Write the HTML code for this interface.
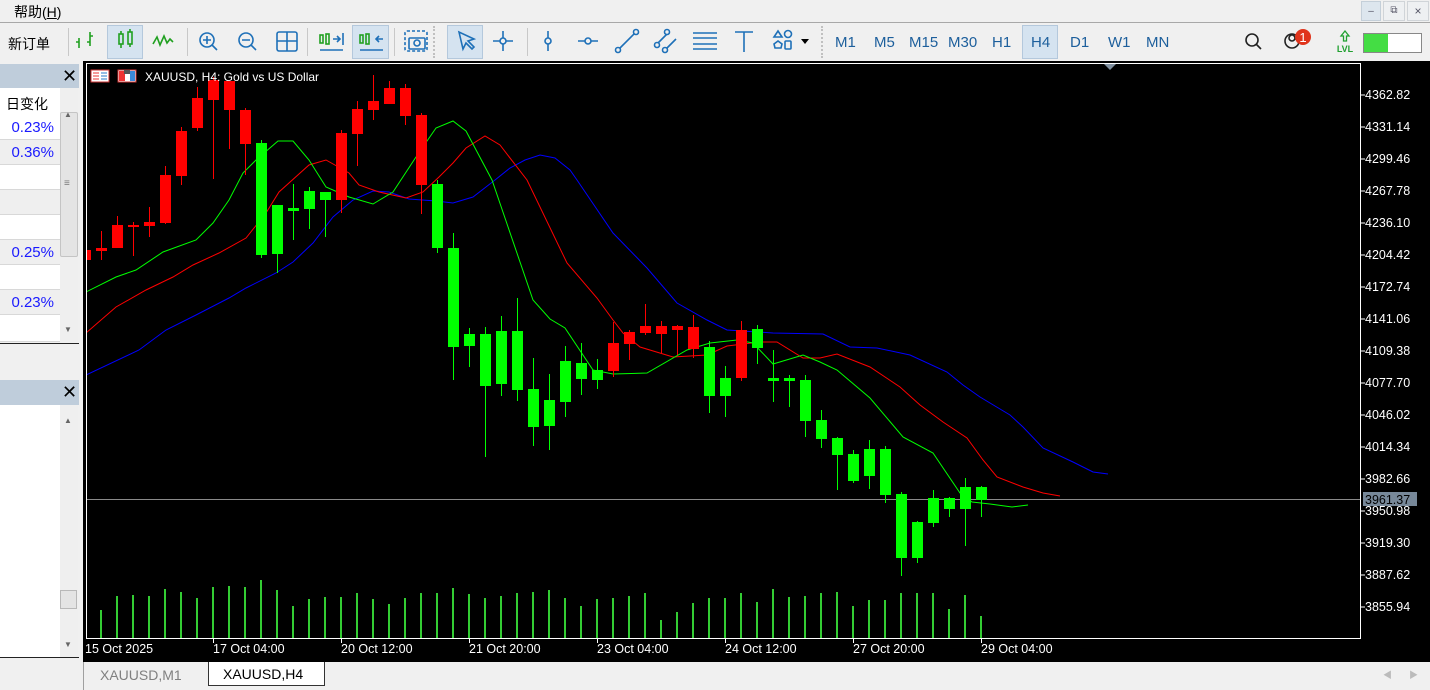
<!DOCTYPE html>
<html><head><meta charset="utf-8"><style>
*{margin:0;padding:0;box-sizing:border-box}
body{width:1430px;height:690px;position:relative;overflow:hidden;background:#f0f0f0;font-family:"Liberation Sans","Noto Sans CJK SC",sans-serif;font-size:13px;color:#000}
.a{position:absolute}
.tf{position:absolute;top:34px;font-size:15px;color:#1d5f9c}
.sep{position:absolute;top:28px;width:1px;height:28px;background:#c8c8c8}
.dsep{position:absolute;top:26px;width:2px;height:32px;border-left:2px dotted #c0c0c0}
.sel{position:absolute;top:25px;height:34px;background:#d5e3f0;border:1px solid #b4c8dc}
.row{position:absolute;left:0;width:60px;height:25px;border-bottom:1px solid #d8d8d8;color:#1a1aff;font-size:15px;text-align:right;padding-right:6px;line-height:25px}
</style></head><body>
<div class="a" style="left:14px;top:2px;font-size:14px">帮助(<u>H</u>)</div>
<div class="a" style="left:1361px;top:1px;width:20px;height:20px;background:#dde6ee;border:1px solid #c4cfd9;text-align:center;font-size:10px;color:#556;line-height:20px">–</div>
<div class="a" style="left:1383px;top:1px;width:22px;height:20px;background:#eef0f2;border:1px solid #d0d4d8;text-align:center;font-size:10px;color:#556;line-height:18px">⧉</div>
<div class="a" style="left:1407px;top:1px;width:22px;height:20px;background:#eef0f2;border:1px solid #d0d4d8;text-align:center;font-size:12px;color:#556;line-height:18px">×</div>
<div class="a" style="left:0;top:22px;width:1430px;height:1px;background:#a8a8a8"></div>
<div class="a" style="left:8px;top:34px;font-size:14px">新订单</div>
<div class="sep" style="left:68px"></div>
<div class="sel" style="left:107px;width:36px"></div>
<div class="sel" style="left:352px;width:37px"></div>
<div class="sel" style="left:447px;width:36px"></div>
<div class="sel" style="left:1022px;width:36px"></div>
<div class="sep" style="left:187px"></div><div class="sep" style="left:307px"></div><div class="sep" style="left:394px"></div>
<div class="dsep" style="left:433px"></div><div class="sep" style="left:527px"></div><div class="dsep" style="left:821px"></div>
<svg class="a" style="left:0;top:22px" width="1430" height="40" fill="none" stroke-width="1.6">
<g stroke="#20a020"><path d="M79 26v-10M76 20h3M90 24v-14M90 14h3M87 20h3"/>
<rect x="119" y="12" width="4" height="10"/><path d="M121 9v3M121 22v4"/><rect x="128" y="10" width="4" height="12"/><path d="M130 7v3M130 22v3"/>
<path d="M153 22l4-7 3 8 4-9 3 7 3-4 3 3"/>
<rect x="320" y="13" width="3" height="8"/><rect x="326" y="12" width="3" height="10"/><rect x="360" y="13" width="3" height="8"/><rect x="366" y="12" width="3" height="10"/></g>
<g stroke="#1e70b8"><circle cx="207" cy="18" r="7"/><path d="M212 23l5 5M203 18h8M207 14v8"/>
<circle cx="246" cy="18" r="7"/><path d="M251 23l5 5M242 18h8"/>
<rect x="277" y="10" width="20" height="19" rx="2"/><path d="M287 10v19M277 19h20"/>
<path d="M333 17h6M337 14l3 3-3 3M343 11v12M320 28h23"/><path d="M383 17h-6M379 14l-3 3 3 3M360 28h23"/>
<rect x="405" y="9" width="22" height="20" rx="2" stroke-dasharray="3 2"/><rect x="409" y="16" width="16" height="11" rx="1"/><circle cx="417" cy="21" r="3"/>
<path d="M459 10l4 17 3-6 6 6 2-2-6-6 6-2z"/>
<path d="M503 9v20M493 19h20"/><circle cx="503" cy="19" r="3" fill="#f0f0f0"/>
<path d="M548 9v20"/><circle cx="548" cy="19" r="3" fill="#f0f0f0"/>
<path d="M578 19h20"/><circle cx="588" cy="19" r="3" fill="#f0f0f0"/>
<path d="M617 29l20-20"/><circle cx="618" cy="28" r="2.5" fill="#f0f0f0"/><circle cx="636" cy="10" r="2.5" fill="#f0f0f0"/>
<path d="M656 23l12-12M664 29l12-12"/><circle cx="657" cy="23" r="2.5" fill="#f0f0f0"/><circle cx="667" cy="10" r="2.5" fill="#f0f0f0"/><circle cx="665" cy="28" r="2.5" fill="#f0f0f0"/>
<path d="M693 11h24M693 16h24M693 22h24M693 27h24"/>
<path d="M735 10h18M744 10v20"/>
<path d="M778 9l4 6h-8z"/><circle cx="788" cy="12" r="3.5"/><path d="M774 22l4-3 4 3-1 4h-6z"/><rect x="785" y="19" width="6" height="8" rx="1"/></g>
<path d="M801 17h8l-4 5z" fill="#000"/>
<g stroke="#222"><circle cx="1252" cy="18" r="6"/><path d="M1256 22l5 5"/><circle cx="1292" cy="19" r="7"/><circle cx="1292" cy="16" r="3"/></g>
<circle cx="1303" cy="15" r="8" fill="#e0341c"/><text x="1303" y="20" fill="#fff" font-size="13" text-anchor="middle" stroke="none" font-family="Liberation Sans">1</text>
<path d="M1345 9l-4 5h2.5v5h3v-5h2.5z" stroke="#20a030" stroke-width="1.3"/>
<text x="1345" y="30" fill="#20a030" font-size="9" text-anchor="middle" font-family="Liberation Sans" font-weight="bold">LVL</text>
<rect x="1363.5" y="11.5" width="58" height="19" fill="#fff" stroke="#888" stroke-width="1"/><rect x="1364" y="12" width="24" height="18" fill="#44dd44" stroke="none"/>
</svg>
<div class="tf" style="left:835px">M1</div><div class="tf" style="left:874px">M5</div><div class="tf" style="left:909px">M15</div><div class="tf" style="left:948px">M30</div><div class="tf" style="left:992px">H1</div><div class="tf" style="left:1031px">H4</div><div class="tf" style="left:1070px">D1</div><div class="tf" style="left:1108px">W1</div><div class="tf" style="left:1146px">MN</div>
<div class="a" style="left:0;top:61px;width:83px;height:601px;background:#f0f0f0"></div>
<div class="a" style="left:0;top:64px;width:79px;height:24px;background:#bfcddb"></div>
<div class="a" style="left:62px;top:64px;font-size:18px;line-height:24px">✕</div>
<div class="a" style="left:0;top:88px;width:60px;height:254px;background:#fff"></div>
<div class="a" style="left:6px;top:94px;font-size:14px">日变化</div>
<div class="row" style="top:115px;background:#fff">0.23%</div>
<div class="row" style="top:140px;background:#efefef">0.36%</div>
<div class="row" style="top:165px;background:#fff"></div>
<div class="row" style="top:190px;background:#efefef"></div>
<div class="row" style="top:215px;background:#fff"></div>
<div class="row" style="top:240px;background:#efefef">0.25%</div>
<div class="row" style="top:265px;background:#fff"></div>
<div class="row" style="top:290px;background:#efefef">0.23%</div>
<div class="row" style="top:315px;background:#fff;height:27px"></div>
<div class="a" style="left:60px;top:88px;width:18px;height:254px;background:#efefef"></div>
<div class="a" style="left:60px;top:112px;width:18px;height:145px;background:#e4e4e4;border:1px solid #c4c4c4;border-radius:2px"></div>
<div class="a" style="left:64px;top:110px;font-size:8px;color:#666">▲</div><div class="a" style="left:64px;top:325px;font-size:8px;color:#666">▼</div>
<div class="a" style="left:64px;top:178px;font-size:10px;color:#777">≡</div>
<div class="a" style="left:0;top:343px;width:79px;height:1px;background:#222"></div>
<div class="a" style="left:0;top:380px;width:79px;height:25px;background:#bfcddb"></div>
<div class="a" style="left:62px;top:380px;font-size:18px;line-height:25px">✕</div>
<div class="a" style="left:0;top:405px;width:60px;height:252px;background:#fff"></div>
<div class="a" style="left:60px;top:405px;width:18px;height:252px;background:#efefef"></div>
<div class="a" style="left:60px;top:590px;width:17px;height:19px;background:#e4e4e4;border:1px solid #b8b8b8"></div>
<div class="a" style="left:64px;top:416px;font-size:8px;color:#666">▲</div><div class="a" style="left:64px;top:640px;font-size:8px;color:#666">▼</div>
<div class="a" style="left:0;top:657px;width:79px;height:1px;background:#222"></div>
<div class="a" style="left:83px;top:61px;width:1347px;height:601px;background:#000"></div>
<svg class="a" style="left:0;top:0" width="1430" height="690" font-family="Liberation Sans" font-size="12.5">
<defs><clipPath id="c"><rect x="87" y="64" width="1273" height="574"/></clipPath></defs>
<rect x="86.5" y="63.5" width="1274" height="575" fill="none" stroke="#fff"/>
<path d="M1104 64h12l-6 6z" fill="#8090a0"/>
<line x1="87" y1="499.5" x2="1360" y2="499.5" stroke="#8a8a8a"/>
<g clip-path="url(#c)" fill="none" stroke-width="1">
<polyline stroke="#0000ff" points="86,375 139,350 166,330 196,315 229,298 246,288 276,273 293,262 313,243 333,217 353,200 373,191 389,192 409,199 436,201 453,203 473,197 495,180 510,168 525,160 540,155 555,158 570,170 577,180 613,233 647,268 677,303 707,320 727,330 773,333 823,334 850,347 877,348 910,355 947,372 963,385 980,397 1010,415 1023,427 1043,448 1073,462 1093,472 1108,474"/>
<polyline stroke="#ff0000" points="86,333 116,307 146,290 173,277 193,265 219,253 246,238 266,213 279,192 309,165 326,160 349,173 359,185 379,192 406,198 423,192 439,177 453,163 466,148 485,136 500,145 527,180 567,263 597,298 613,320 623,333 640,347 673,357 707,355 727,346 760,342 777,342 803,358 820,358 837,354 870,367 900,387 920,405 943,422 967,438 983,460 997,477 1023,487 1043,493 1060,496"/>
<polyline stroke="#00ff00" points="86,292 116,277 136,270 163,252 196,240 213,223 229,200 243,173 256,160 278,141 293,141 309,160 326,187 349,197 373,204 393,192 416,157 436,128 453,121 466,131 492,180 533,300 550,319 565,328 593,370 613,374 647,373 687,350 710,343 737,340 753,343 773,364 803,355 820,362 837,370 870,398 903,437 933,453 960,493 972,502 990,504 1012,507 1028,505"/>
</g>
<g clip-path="url(#c)" id="cd"></g>
<g fill="#33cc33" id="vol"></g>
<g fill="#fff">
<text x="1365" y="99">4362.82</text><text x="1365" y="131">4331.14</text><text x="1365" y="163">4299.46</text><text x="1365" y="195">4267.78</text><text x="1365" y="227">4236.10</text><text x="1365" y="259">4204.42</text><text x="1365" y="291">4172.74</text><text x="1365" y="323">4141.06</text><text x="1365" y="355">4109.38</text><text x="1365" y="387">4077.70</text><text x="1365" y="419">4046.02</text><text x="1365" y="451">4014.34</text><text x="1365" y="483">3982.66</text><text x="1365" y="515">3950.98</text><text x="1365" y="547">3919.30</text><text x="1365" y="579">3887.62</text><text x="1365" y="611">3855.94</text>
<text x="85" y="653">15 Oct 2025</text><text x="213" y="653">17 Oct 04:00</text><text x="341" y="653">20 Oct 12:00</text><text x="469" y="653">21 Oct 20:00</text><text x="597" y="653">23 Oct 04:00</text><text x="725" y="653">24 Oct 12:00</text><text x="853" y="653">27 Oct 20:00</text><text x="981" y="653">29 Oct 04:00</text>
<text x="145" y="81" font-size="12">XAUUSD, H4:  Gold vs US Dollar</text>
</g>
<path stroke="#fff" d="M1361 95h4M1361 127h4M1361 159h4M1361 191h4M1361 223h4M1361 255h4M1361 287h4M1361 319h4M1361 351h4M1361 383h4M1361 415h4M1361 447h4M1361 479h4M1361 511h4M1361 543h4M1361 575h4M1361 607h4M213.5 639v4M341.5 639v4M469.5 639v4M597.5 639v4M725.5 639v4M853.5 639v4M981.5 639v4"/>
<rect x="1363" y="492" width="54" height="14" fill="#778899"/><text x="1365" y="504" fill="#000">3961.37</text>
<g><rect x="91" y="70" width="18" height="12" fill="#fff" stroke="#c33"/><path d="M93 73h6M93 76h6M93 79h6" stroke="#e33"/><path d="M101 73h6M101 76h6M101 79h6" stroke="#2878c8"/>
<rect x="118" y="70" width="18" height="12" fill="#fff" stroke="#c33"/><rect x="119" y="71" width="6" height="10" fill="#e33"/><rect x="130" y="71" width="5" height="10" fill="#3a8ad8"/><rect x="124" y="70" width="6" height="4" fill="#555"/></g>
</svg>
<script>
var C=[["r",250,260,246,262],["r",248,251,231,260],["r",225,248,216,248],["r",225,226,222,256],["r",222,226,207,237],["r",175,223,166,224],["r",131,176,127,185],["r",98,128,87,131],["r",80,100,77,179],["r",81,110,81,149],["r",110,144,108,175],["g",143,255,140,258],["g",205,254,205,273],["g",208,211,184,240],["g",191,209,187,229],["g",192,200,192,237],["r",133,200,130,213],["r",109,134,101,166],["r",101,110,75,120],["r",88,104,81,104],["r",88,116,84,125],["r",115,185,113,214],["g",184,248,180,253],["g",248,347,233,380],["g",334,346,328,367],["g",334,386,327,457],["g",331,384,316,396],["g",331,390,298,401],["g",389,427,358,446],["g",400,426,374,450],["g",361,402,346,417],["g",363,379,343,395],["g",370,380,359,389],["r",343,371,322,377],["r",332,344,330,360],["r",326,333,304,335],["r",326,334,321,353],["r",326,330,325,355],["r",327,349,315,358],["g",347,396,341,413],["g",378,396,366,417],["r",330,378,321,381],["g",329,348,325,364],["g",378,381,350,402],["g",378,381,375,407],["g",380,421,375,437],["g",420,439,410,448],["g",438,455,437,490],["g",454,481,450,483],["g",449,476,440,489],["g",449,495,446,503],["g",494,558,492,576],["g",522,558,521,563],["g",498,523,490,527],["g",498,509,497,517],["g",487,509,478,546],["g",487,500,486,517]];
var V=[0,610,596,595,596,589,592,598,587,586,587,580,590,606,599,597,597,593,599,604,598,593,593,588,594,598,596,593,592,590,598,606,599,598,596,593,620,612,603,598,598,593,602,589,597,596,593,592,606,600,600,593,593,593,609,595,616];
var s="",v="";
C.forEach(function(c,k){var col=c[0]=="r"?"#ff0000":"#00ff00";s+='<rect x="'+(85+16*k)+'" y="'+c[3]+'" width="1" height="'+(c[4]-c[3])+'" fill="'+col+'"/><rect x="'+(80+16*k)+'" y="'+c[1]+'" width="11" height="'+Math.max(c[2]-c[1],2)+'" fill="'+col+'"/>';});
for(var k=1;k<V.length;k++)v+='<rect x="'+(84+16*k)+'" y="'+V[k]+'" width="2" height="'+(638-V[k])+'"/>';
document.getElementById("cd").innerHTML=s;document.getElementById("vol").innerHTML=v;
</script>
<div class="a" style="left:83px;top:662px;width:1347px;height:28px;background:#f0f0f0"></div>
<div class="a" style="left:83px;top:662px;width:1px;height:28px;background:#a0a0a0"></div>
<div class="a" style="left:100px;top:667px;font-size:14px;color:#808080">XAUUSD,M1</div>
<div class="a" style="left:208px;top:662px;width:117px;height:24px;background:#fff;border:1px solid #333;border-top:none;font-size:14px;padding-left:14px;line-height:24px">XAUUSD,H4</div>
<div class="a" style="left:1383px;top:668px;font-size:9px;color:#bbb">◀</div><div class="a" style="left:1409px;top:668px;font-size:9px;color:#bbb">▶</div>
</body></html>
